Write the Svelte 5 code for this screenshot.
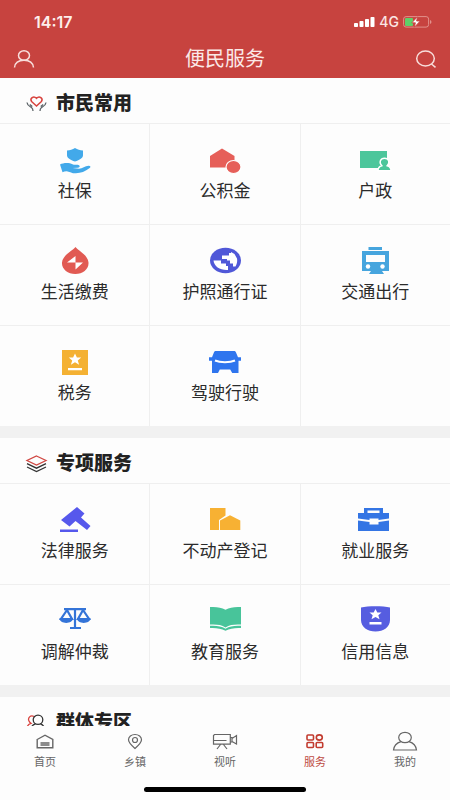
<script>
  const sections = [
    {
      title: '市民常用',
      icon: 'heart',
      items: [
        { label: '社保', icon: 'social' },
        { label: '公积金', icon: 'fund' },
        { label: '户政', icon: 'household' },
        { label: '生活缴费', icon: 'drop' },
        { label: '护照通行证', icon: 'globe' },
        { label: '交通出行', icon: 'train' },
        { label: '税务', icon: 'tax' },
        { label: '驾驶行驶', icon: 'car' }
      ]
    },
    {
      title: '专项服务',
      icon: 'layers',
      items: [
        { label: '法律服务', icon: 'gavel' },
        { label: '不动产登记', icon: 'estate' },
        { label: '就业服务', icon: 'briefcase' },
        { label: '调解仲裁', icon: 'scales' },
        { label: '教育服务', icon: 'book' },
        { label: '信用信息', icon: 'credit' }
      ]
    },
    { title: '群体专区', icon: 'people', items: [] }
  ];

  const tabs = [
    { label: '首页', icon: 'home' },
    { label: '乡镇', icon: 'pin' },
    { label: '视听', icon: 'video' },
    { label: '服务', icon: 'apps' },
    { label: '我的', icon: 'me' }
  ];

  let active = $state('服务');
</script>

{#snippet serviceIcon(name)}
  <svg class="service-icon" viewBox="0 0 32 32" aria-hidden="true">
    {#if name === 'social'}
      <g fill="#42a9ea">
        <path d="M16 3c2.500 1.600 5 2.300 8 2.400v4.800c0 2.700-3.200 4.600-8 6.300-4.800-1.700-8-3.600-8-6.300V5.400C11 5.300 13.500 4.600 16 3z" />
        <path d="M1 19.500c3.500-2 9.500-2 12.500-.2 1.800 1 4 .2 6 .7 1.800.6 1.500 2.600-.5 2.700l-5.500.2 6.500.8c3.500-.1 6-2.700 9.500-2.900 2-.1 2.600 1.300 1.200 2.300C26 26.500 22 28.300 17 28.300c-4.500 0-5.500-1.600-8.500-1.900-2-.2-3.500.3-5 .8z" />
      </g>
    {:else if name === 'fund'}
      <path fill="#e65f59" d="M1 22.500V11L13 3.500 25.500 11v11.500z" />
      <ellipse cx="24.500" cy="22" rx="7.500" ry="6.500" fill="#e65f59" stroke="#fff" stroke-width="1.200" />
    {:else if name === 'household'}
      <path fill="#4cc69b" d="M1 6h27v17H1z" />
      <path fill="#4cc69b" stroke="#fff" stroke-width="1.400" d="M19 25.700c0-3 1-4.300 3.800-5-3.200-3-1.500-7.500 2.700-7.500s5.900 4.500 2.700 7.500c2.800.7 3.800 2 3.800 5z" />
    {:else if name === 'drop'}
      <path fill="#e15a53" d="M16.500 1c2 3 12.500 8 13 15.500C30 23 24 28 16.300 28S2.500 23 3 16.500C3.600 9 14.500 4 16.500 1z" />
      <path fill="#fff" d="M8 16.500 16.500 10v6.500H24L16.500 23.500v-7z" />
    {:else if name === 'globe'}
      <ellipse cx="16.500" cy="14.500" rx="15.500" ry="12.700" fill="#5058d8" />
      <path fill="#fff" d="M17 9.500h3V7h2v-1l3.500 2 2.500 4.500c.5 2.700 0 5.500-1.500 8H24v-3h-3v-3h-3v-1.500h-5V9.500z" />
      <path fill="#fff" d="M4.500 14.500h7.500v3h5v2.500h2v4c-7.500.6-14-3.500-14.500-9.500z" />
    {:else if name === 'train'}
      <path fill="#46a5de" fill-rule="evenodd" d="M9.500 1H23v3H9.500zM3 5h27v20h-7l2 3H10l2-3H3zM7 9v7h19V9z" />
      <circle cx="9" cy="20.500" r="2.200" fill="#fff" /><circle cx="23.500" cy="20.500" r="2.200" fill="#fff" />
    {:else if name === 'tax'}
      <path fill="#f4b133" d="M3 3h26v25H3z" />
      <path fill="#fff" d="m16 6.500 1.900 4h4.300l-3.400 2.900 1.300 4.400-4.100-2.500-4.100 2.500 1.300-4.400-3.400-2.900h4.300zM9 21h14v2.300H9z" />
    {:else if name === 'car'}
      <path fill="#2f75ee" d="M7 4h18c1 0 1.500.4 1.900 1.300l2.100 5h3v3.400h-2.500V26h-6.300l-2-3.500H10.800L9 26H3V13.700H0v-3.400h3l2-5C5.300 4.400 6 4 7 4z" />
      <path fill="none" stroke="#fff" stroke-width="2" d="M6 13.500c5 2.300 15 2.300 20 0" />
    {:else if name === 'gavel'}
      <path fill="#5658ec" d="m18 2 7.500 6.500-3.500 4 9.500 8.500-3.500 4-11.500-9-6 5.500L2 15zM1 24.500h18V27H1z" />
    {:else if name === 'estate'}
      <path fill="#f7b133" d="M1 3h15.500v7.500L10 15v10H1z" />
      <path fill="#f7b133" d="M11 25v-9.500L21 10.300l10.300 5.200V25z" />
    {:else if name === 'briefcase'}
      <path fill="#3475e4" fill-rule="evenodd" d="M5 3h19v5h6v5.500L19.500 15v-1.500h-9V15L-1 13.500V8h6zM8.500 5.500V8h12V5.500z" />
      <path fill="#3475e4" d="m-1 15.500 11.500 1.500v2.500h9V17L30 15.500V26H-1z" />
    {:else if name === 'scales'}
      <g fill="none" stroke="#3474d8" stroke-width="2.200">
        <path d="M5 3.200h22M16 3v18M11 22h11M8 4 2 13h11zM24 4l-5 9h11z" />
      </g>
      <path fill="#3474d8" d="M.5 12h13.500c0 6.500-13.500 6.500-13.500 0zM18 12h13.500c0 6.500-13.500 6.500-13.500 0z" />
    {:else if name === 'book'}
      <g fill="#48c49a">
        <path d="M1 1c7-.4 11 .5 15.500 2.700C21 1.500 25 .6 32 1v17.500c-7-.2-11 0-15.500 3C12 18.500 8 18.300 1 18.500z" />
        <path d="M1 19.800c7-.3 11 .3 15.500 3 4.500-2.700 8.500-3.300 15.500-3v2.200c-6-.3-11 .4-15.500 2.800C12 22.400 7 21.700 1 22z" />
      </g>
    {:else if name === 'credit'}
      <path fill="#565de0" d="M2 1.500C9-.3 24-.3 31 1.500V14c0 7-6.500 11.500-14.500 11.500S2 21 2 14z" />
      <path fill="#fff" d="m16.500 3 1.800 3.600h4.200l-3.200 2.600 1.200 4-4-2.300-4 2.300 1.200-4-3.200-2.600h4.200zM10.500 16h12v2.600h-12z" />
    {/if}
  </svg>
{/snippet}

{#snippet headingIcon(name)}
  <svg class="heading-icon" viewBox="0 0 22 18" fill="none" stroke-width="1.300" aria-hidden="true">
    {#if name === 'heart'}
      <path stroke="#d8443f" stroke-width="1.500" d="M10.500 11 5.600 6.500C3.500 3.500 7.500.200 10.500 3.300c3-3.100 7 .2 4.900 3.200z" />
      <path stroke="#5d6468" d="M1 7.500c.4 3.300 2.500 3.700 4.500 5C6.600 13.300 7 14.500 7 16M3.800 9.500l2.500 2M20 7.500c-.4 3.300-2.500 3.700-4.500 5C14.400 13.300 14 14.500 14 16M17.200 9.500l-2.500 2" />
    {:else if name === 'layers'}
      <path stroke="#d04742" d="M10.500 1 20 5.500 10.500 10 1 5.500z" />
      <path stroke="#333" d="m1 8.700 9.500 4.500L20 8.700M1 12l9.500 4.500L20 12" />
    {:else if name === 'people'}
      <path stroke="#d8443f" d="M8 2.500C4.500.500 1.500 4 3 7c.4 1 1 1.700 2 2.300C3 10 1.500 11 1 13.500" />
      <ellipse cx="12" cy="5.800" rx="4.800" ry="4.600" stroke="#333" />
      <path stroke="#333" d="M5 14.500c.6-2.500 2-4 4.500-4.700M14.500 9.800c2 .7 3.400 2.200 4 4.700" />
    {/if}
  </svg>
{/snippet}

{#snippet tabIcon(name)}
  <svg class="tab-icon" viewBox="0 0 28 22" fill="none" stroke="currentColor" stroke-width="1.200" aria-hidden="true">
    {#if name === 'home'}
      <path d="M6.200 8.500 14 4.200l7.800 4.300v8.300H6.200z" stroke-width="1.400" />
      <path fill="currentColor" stroke="none" opacity=".75" d="M9.500 11h9v4h-9z" />
    {:else if name === 'pin'}
      <path d="M14 17.500C10 14 7.500 11.500 7.500 8.800c0-3 2.800-5.300 6.500-5.300s6.500 2.300 6.500 5.300c0 2.700-2.500 5.200-6.500 8.700z" />
      <circle cx="14" cy="9" r="2.500" />
    {:else if name === 'video'}
      <path d="M3.500 3.500h15.800v9.700H2.500V4.500zM2.500 9.500h13M9.500 13.500 6 18M12.500 13.500 16 18M19.500 6.500h1.500v4.500h-1.500M21 7.500l4.500-3v8.500L21 10.500" />
    {:else if name === 'apps'}
      <g stroke="#c23b2f" stroke-width="1.600">
        <rect x="6" y="4" width="6.500" height="5" rx="1" /><ellipse cx="18.300" cy="6.500" rx="3" ry="2.600" />
        <rect x="6" y="11.500" width="6.500" height="5" rx="1" /><rect x="15.200" y="11.500" width="6.500" height="5" rx="1" />
      </g>
    {:else if name === 'me'}
      <ellipse cx="14" cy="6.500" rx="6.300" ry="5.200" />
      <path d="M10 10.600c-4 1.200-7 3.700-7.500 8.400h23c-.5-4.700-3.500-7.200-7.500-8.400" />
    {/if}
  </svg>
{/snippet}

<div class="app">
  <header>
    <div class="status">
      <span class="time">14:17</span>
      <div class="signals">
        <svg width="21" height="12" viewBox="0 0 21 12" fill="#fff" aria-hidden="true">
          <rect y="7" width="4" height="4" rx=".8" /><rect x="5.500" y="5" width="4" height="6" rx=".8" /><rect x="11" y="3" width="4" height="8" rx=".8" /><rect x="16.500" y="1" width="4" height="10" rx=".8" />
        </svg>
        <span class="network">4G</span>
        <svg width="29" height="12" viewBox="0 0 29 12" aria-hidden="true">
          <rect x=".6" y=".6" width="25" height="10.500" rx="2.500" fill="none" stroke="#e2918b" />
          <rect x="2" y="2" width="8" height="8" rx="1" fill="#5fd068" />
          <path fill="#fff" stroke="#c7433f" stroke-width=".8" d="M14.500.800 8.800 6.800h3.600l-1 4.400L17.200 5h-3.600z" />
          <path fill="#e2918b" d="M27 4v4c2-.7 2-3.300 0-4z" />
        </svg>
      </div>
    </div>
    <nav class="titlebar" aria-label="顶部">
      <button aria-label="个人中心">
        <svg width="22" height="20" viewBox="0 0 22 20" fill="none" stroke="#f8dedb" stroke-width="1.500" aria-hidden="true">
          <ellipse cx="11" cy="6.500" rx="5.500" ry="4.800" /><path d="M1.500 18.500c.5-4.500 3.500-7.200 9.500-7.200s9 2.700 9.500 7.200" />
        </svg>
      </button>
      <h1>便民服务</h1>
      <button aria-label="搜索">
        <svg width="22" height="20" viewBox="0 0 22 20" fill="none" stroke="#f8dedb" stroke-width="1.500" aria-hidden="true">
          <ellipse cx="10.500" cy="9.500" rx="8.800" ry="7.500" /><path d="m16.500 15 4 3.300" />
        </svg>
      </button>
    </nav>
  </header>

  <main>
    {#each sections as section}
      <section>
        <h2>{@render headingIcon(section.icon)}<span>{section.title}</span></h2>
        <div class="grid">
          {#each section.items as item}
            <button class="service">
              {@render serviceIcon(item.icon)}
              <span>{item.label}</span>
            </button>
          {/each}
        </div>
      </section>
    {/each}
  </main>

  <footer>
    <nav class="tabs" aria-label="主导航">
      {#each tabs as tab}
        <button class="tab" class:active={active === tab.label} onclick={() => (active = tab.label)}>
          {@render tabIcon(tab.icon)}
          <span>{tab.label}</span>
        </button>
      {/each}
    </nav>
    <div class="home-indicator"></div>
  </footer>
</div>

<style>
  .app {
    display: flex;
    flex-direction: column;
    height: 100vh;
    background: #fdfdfd;
    color: #2b2b2b;
    font-family: "Liberation Sans", "Noto Sans CJK SC", sans-serif;
  }

  button {
    margin: 0;
    padding: 0;
    border: 0;
    background: none;
    color: inherit;
    font: inherit;
    cursor: pointer;
  }

  svg {
    display: block;
    overflow: visible;
  }

  header {
    flex: none;
    background: #c7433f;
    color: #fff;
  }

  .status {
    display: flex;
    align-items: center;
    justify-content: space-between;
    box-sizing: border-box;
    height: 40px;
    padding: 4px 18px 0 34px;
    font-family: Inter, sans-serif;
  }

  .time {
    font-size: 16px;
    line-height: 24px;
    font-weight: 600;
    color: #fdeeec;
  }

  .signals {
    display: flex;
    align-items: center;
    gap: 4px;
  }

  .network {
    font-size: 14px;
    line-height: 16px;
    font-weight: 500;
    color: #fbe6e4;
  }

  .titlebar {
    display: flex;
    align-items: center;
    justify-content: space-between;
    height: 38px;
    padding: 0 13px;
  }

  h1 {
    margin: 0;
    font-size: 20px;
    line-height: 28px;
    font-weight: 400;
    color: #fbe9e7;
  }

  main {
    flex: 1;
    min-height: 0;
    overflow-y: auto;
    scrollbar-width: none;
  }

  section + section {
    border-top: 12px solid #f1f1f1;
  }

  h2 {
    display: flex;
    align-items: center;
    gap: 8px;
    box-sizing: border-box;
    height: 46px;
    margin: 0;
    padding: 6px 26px 0;
    border-bottom: 1px solid #efefef;
    font-size: 19px;
    line-height: 28px;
    font-weight: 900;
    color: #222;
  }

  .heading-icon {
    width: 22px;
    height: 18px;
  }

  .grid {
    display: grid;
    grid-template-columns: repeat(3, 1fr);
    gap: 1px;
    background: #efefef;
  }

  /* Fills the last column when the final row is one item short. */
  .grid:has(> :nth-child(3n + 2):last-child)::after {
    content: "";
    background: #fdfdfd;
  }

  .service {
    display: flex;
    flex-direction: column;
    align-items: center;
    gap: 3px;
    height: 100px;
    padding-top: 21px;
    background: #fdfdfd;
    font-size: 17px;
    line-height: 24px;
  }

  .service-icon {
    width: 32px;
    height: 32px;
  }

  footer {
    flex: none;
    height: 74px;
    background: #fdfdfd;
  }

  .tabs {
    display: flex;
    height: 61px;
  }

  .tab {
    flex: 1;
    display: flex;
    flex-direction: column;
    align-items: center;
    padding-top: 5px;
    color: #666;
    font-size: 11px;
    line-height: 18px;
  }

  .tab-icon {
    width: 28px;
    height: 22px;
  }

  .tab.active {
    color: #bd4a43;
  }

  .home-indicator {
    width: 36%;
    height: 5px;
    margin: 0 auto;
    border-radius: 3px;
    background: #000;
  }
</style>
